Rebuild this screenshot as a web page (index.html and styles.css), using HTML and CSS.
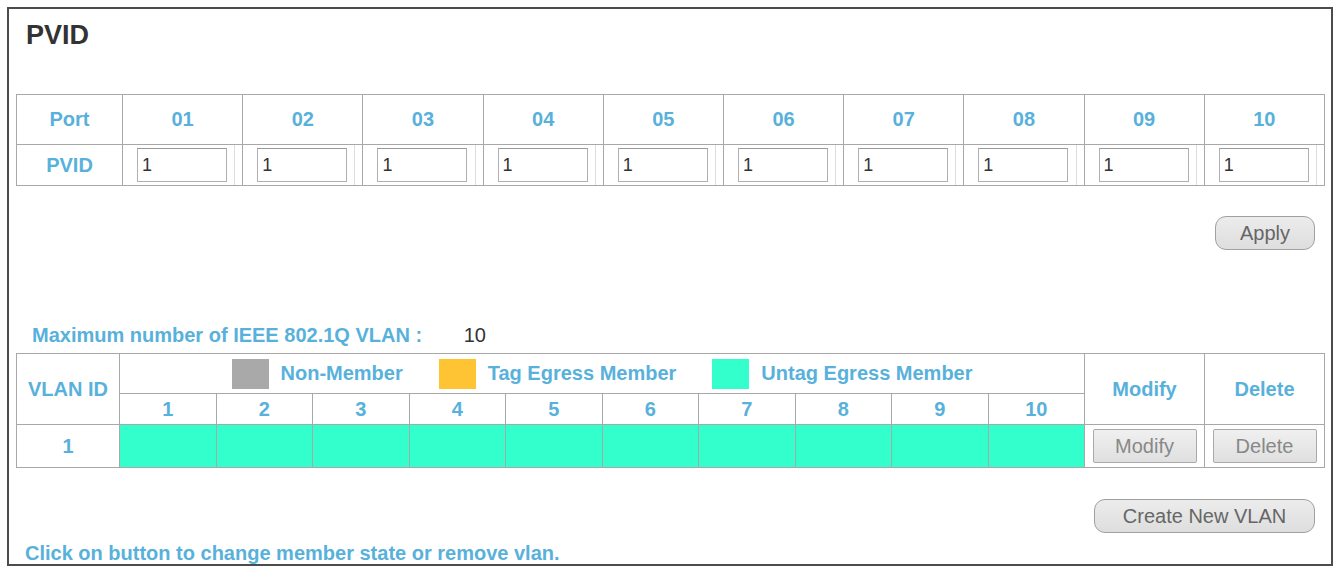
FILE: index.html
```html
<!DOCTYPE html>
<html lang="en">
<head>
  <title>PVID</title>
  <link rel="stylesheet" href="styles.css">
</head>
<body>
  <div class="panel">
    <h1 class="title">PVID</h1>

    <table class="grid pvid-table">
      <colgroup>
        <col class="label-col">
        <col span="10">
      </colgroup>
      <tr class="head-row">
        <th>Port</th>
        <th>01</th><th>02</th><th>03</th><th>04</th><th>05</th>
        <th>06</th><th>07</th><th>08</th><th>09</th><th>10</th>
      </tr>
      <tr class="input-row">
        <th>PVID</th>
        <td><div class="pvid-cell"><input type="text" value="1"></div></td>
        <td><div class="pvid-cell"><input type="text" value="1"></div></td>
        <td><div class="pvid-cell"><input type="text" value="1"></div></td>
        <td><div class="pvid-cell"><input type="text" value="1"></div></td>
        <td><div class="pvid-cell"><input type="text" value="1"></div></td>
        <td><div class="pvid-cell"><input type="text" value="1"></div></td>
        <td><div class="pvid-cell"><input type="text" value="1"></div></td>
        <td><div class="pvid-cell"><input type="text" value="1"></div></td>
        <td><div class="pvid-cell"><input type="text" value="1"></div></td>
        <td><div class="pvid-cell"><input type="text" value="1"></div></td>
      </tr>
    </table>

    <div class="actions apply-row">
      <button class="round-btn apply-btn">Apply</button>
    </div>

    <div class="max-vlan">
      <span class="max-label">Maximum number of IEEE 802.1Q VLAN :</span>
      <span class="max-value">10</span>
    </div>

    <table class="grid vlan-table">
      <colgroup>
        <col class="id-col">
        <col span="10">
        <col class="btn-col">
        <col class="btn-col">
      </colgroup>
      <tr class="legend-row">
        <th rowspan="2">VLAN ID</th>
        <th colspan="10" class="legend-cell">
          <div class="legend">
            <span class="legend-item"><span class="swatch non-member"></span>Non-Member</span>
            <span class="legend-item"><span class="swatch tag-member"></span>Tag Egress Member</span>
            <span class="legend-item"><span class="swatch untag-member"></span>Untag Egress Member</span>
          </div>
        </th>
        <th rowspan="2">Modify</th>
        <th rowspan="2">Delete</th>
      </tr>
      <tr class="port-row">
        <th>1</th><th>2</th><th>3</th><th>4</th><th>5</th>
        <th>6</th><th>7</th><th>8</th><th>9</th><th>10</th>
      </tr>
      <tr class="data-row">
        <th>1</th>
        <td class="untag"></td><td class="untag"></td><td class="untag"></td><td class="untag"></td><td class="untag"></td>
        <td class="untag"></td><td class="untag"></td><td class="untag"></td><td class="untag"></td><td class="untag"></td>
        <td class="btn-cell"><button class="cell-btn modify-btn">Modify</button></td>
        <td class="btn-cell"><button class="cell-btn delete-btn">Delete</button></td>
      </tr>
    </table>

    <div class="actions create-row">
      <button class="round-btn create-btn">Create New VLAN</button>
    </div>

    <p class="hint">Click on button to change member state or remove vlan.</p>
  </div>
</body>
</html>
```

FILE: styles.css
```css
body {
  margin: 0;
  background: #fff;
  font-family: "Liberation Sans", Arial, sans-serif;
}
.panel {
  box-sizing: border-box;
  height: 559px;
  margin: 7px 1px 0 7px;
  padding: 0 6px 0 7px;
  border: 2px solid #4c4c4c;
  overflow: hidden;
}
.title {
  margin: 13px 0 45px 10px;
  font-size: 27px;
  line-height: 27px;
  font-weight: bold;
  color: #333;
}
.grid {
  width: 1309px;
  table-layout: fixed;
  border-collapse: collapse;
}
.grid th,
.grid td {
  border: 1px solid #a8a8a8;
  padding: 0;
  text-align: center;
  font-size: 20px;
  font-weight: bold;
  color: #58b1db;
}
.pvid-table .label-col {
  width: 106px;
}
.pvid-table .head-row th {
  height: 49px;
}
.pvid-table .input-row th,
.pvid-table .input-row td {
  height: 40px;
}
.pvid-cell {
  height: 40px;
  margin-right: 7px;
  padding-left: 14px;
  border-right: 1px solid #ddd;
  display: flex;
  align-items: center;
}
.pvid-cell input {
  box-sizing: border-box;
  width: 90px;
  height: 34px;
  margin: 0;
  padding: 0 4px;
  border: 1px solid #b0b0b0;
  border-top-color: #999;
  font-family: "Liberation Sans", Arial, sans-serif;
  font-size: 18px;
  color: #333;
}
.actions {
  display: flex;
  justify-content: flex-end;
  padding-right: 10px;
}
.apply-row {
  margin-top: 30px;
}
.create-row {
  margin-top: 31px;
}
.round-btn {
  height: 34px;
  padding: 0 12px;
  border: 1px solid #a0a0a0;
  border-radius: 11px;
  background: linear-gradient(#ececec, #dedede);
  font-family: "Liberation Sans", Arial, sans-serif;
  font-size: 20px;
  color: #666;
}
.apply-btn {
  width: 100px;
}
.create-btn {
  width: 221px;
}
.max-vlan {
  margin: 73px 0 6px 16px;
  line-height: 24px;
  font-size: 20px;
}
.max-label {
  font-weight: bold;
  color: #58b1db;
}
.max-value {
  margin-left: 36px;
  color: #333;
}
.vlan-table .id-col {
  width: 103px;
}
.vlan-table .btn-col {
  width: 120px;
}
.legend-row th {
  height: 39px;
}
.port-row th {
  height: 30px;
}
.data-row th,
.data-row td {
  height: 42px;
}
.legend-cell {
  border-bottom: 1px solid #a8a8a8;
}
.legend {
  display: flex;
  justify-content: center;
  align-items: center;
  gap: 36px;
}
.legend-item {
  display: flex;
  align-items: center;
  gap: 12px;
}
.swatch {
  width: 37px;
  height: 30px;
}
.non-member {
  background: #a9a9a9;
}
.tag-member {
  background: #ffc433;
}
.untag-member {
  background: #33ffcc;
}
.data-row .untag {
  background: #33ffcc;
}
.btn-cell {
  padding: 0 7px;
}
.cell-btn {
  width: 104px;
  height: 34px;
  padding: 0;
  border: 1px solid #aaa;
  border-radius: 2px;
  background: linear-gradient(#f0f0f0, #e0e0e0);
  font-family: "Liberation Sans", Arial, sans-serif;
  font-size: 20px;
  color: #888;
}
.hint {
  margin: 8px 0 0 9px;
  line-height: 24px;
  font-size: 20px;
  font-weight: bold;
  color: #58b1db;
}
```
